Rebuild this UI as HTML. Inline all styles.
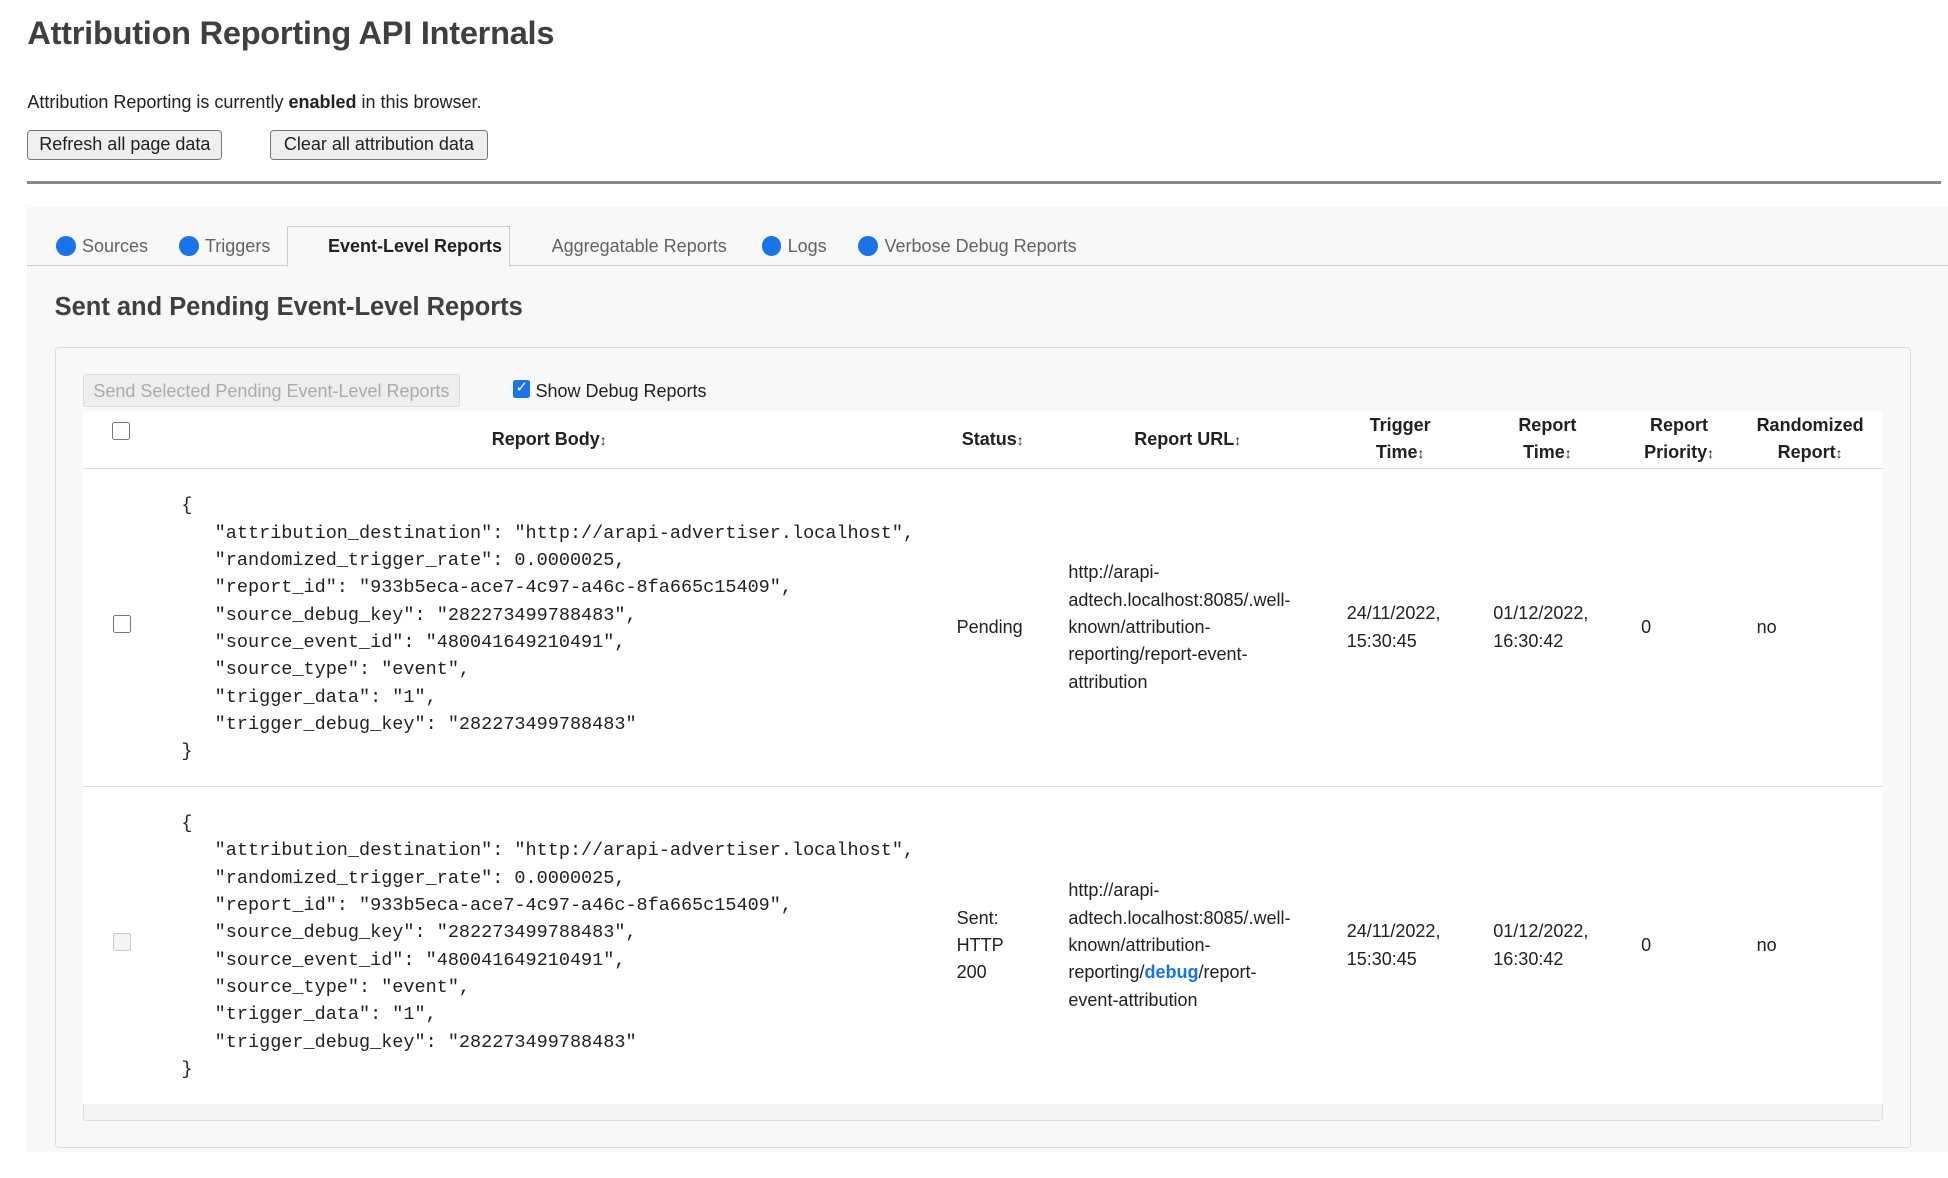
<!DOCTYPE html>
<html><head><meta charset="utf-8"><style>
html,body{margin:0;padding:0;background:#fff;width:1948px;height:1178px;overflow:hidden}
#w{zoom:1.24235;width:1568px;height:948px;position:relative;font-family:"Liberation Sans",Arial,sans-serif;color:#202124;font-size:14.5px}
.a{position:absolute}
h1{position:absolute;left:22px;top:12px;margin:0;font-size:26.2px;font-weight:bold;color:#3c4043;letter-spacing:-0.2px}
.btn{position:absolute;top:105px;border:1px solid #767676;border-radius:3px;background:#efefef;font-size:14.5px;line-height:22px;text-align:center;box-sizing:border-box;height:24px}
.dot{display:inline-block;width:16px;height:16px;border-radius:50%;background:#1a73e8;vertical-align:-3px;margin-right:5px}
.tab{position:absolute;top:190px;font-size:14.5px;color:#5f6368}
table{position:absolute;left:67px;top:331px;width:1449px;border-collapse:collapse;table-layout:fixed;background:#fff;font-size:14.5px}
th{height:46px;font-weight:bold;text-align:center;line-height:22px;padding:0 4px;border-bottom:1px solid #ddd}
td{vertical-align:middle;padding:0 16px;line-height:22px}
tr.r td{height:253px}
tr.r1 td{border-bottom:1px solid #e0e0e0}
pre{margin:0;font-family:"Liberation Mono",monospace;font-size:14.9px;line-height:22px;color:#202124}
.ar{font-size:11px}
</style></head><body><div id="w">
<h1>Attribution Reporting API Internals</h1>
<div class="a" style="left:22px;top:74px">Attribution Reporting is currently <b>enabled</b> in this browser.</div>
<div class="btn" style="left:22px;width:157px">Refresh all page data</div>
<div class="btn" style="left:217px;width:176px">Clear all attribution data</div>
<div class="a" style="left:22px;top:146px;width:1540px;height:2px;background:#888"></div>
<div class="a" style="left:22px;top:167px;width:1546px;height:760px;background:#f8f8f8"></div>
<div class="a" style="left:22px;top:213px;width:1546px;height:1px;background:#ccc"></div>
<div class="a" style="left:231px;top:182px;width:178px;height:32px;background:#f8f8f8;border:1px solid #ccc;border-bottom:none"></div>
<div class="tab" style="left:45px"><span class="dot"></span>Sources</div>
<div class="tab" style="left:144px"><span class="dot"></span>Triggers</div>
<div class="tab" style="left:264px;color:#202124;font-weight:bold">Event-Level Reports</div>
<div class="tab" style="left:444px">Aggregatable Reports</div>
<div class="tab" style="left:613px"><span class="dot"></span>Logs</div>
<div class="tab" style="left:691px"><span class="dot"></span>Verbose Debug Reports</div>
<div class="a" style="left:44px;top:236px;font-size:20.5px;font-weight:bold;color:#3c4043">Sent and Pending Event-Level Reports</div>
<div class="a" style="left:44px;top:279px;width:1494px;height:645px;border:1px solid #ddd;border-radius:3px;background:#f8f8f8;box-sizing:border-box"></div>
<div class="a" style="left:67px;top:301px;width:303px;height:27px;border:1px solid #ddd;border-radius:2px;background:#eee;color:#aaa;text-align:center;line-height:27px;box-sizing:border-box">Send Selected Pending Event-Level Reports</div>
<div class="a" style="left:413px;top:306px;width:14px;height:14px;background:#1a73e8;border-radius:2px;color:#fff;font-size:12px;line-height:14px;text-align:center">✓</div>
<div class="a" style="left:431px;top:307px">Show Debug Reports</div>
<div class="a" style="left:67px;top:331px;width:1449px;height:571px;border:1px solid #ddd;border-radius:3px;box-sizing:border-box;background:#f4f4f4"></div>
<table>
<colgroup><col style="width:63px"><col style="width:624px"><col style="width:90px"><col style="width:224px"><col style="width:118px"><col style="width:119px"><col style="width:93px"><col style="width:118px"></colgroup>
<tr><th><span style="display:inline-block;width:13px;height:13px;border:1px solid #767676;border-radius:2px;vertical-align:8px;margin-left:-2px"></span></th><th>Report Body<span class="ar">↕</span></th><th>Status<span class="ar">↕</span></th><th>Report URL<span class="ar">↕</span></th><th>Trigger<br>Time<span class="ar">↕</span></th><th>Report<br>Time<span class="ar">↕</span></th><th>Report<br>Priority<span class="ar">↕</span></th><th>Randomized<br>Report<span class="ar">↕</span></th></tr>
<tr class="r r1"><td style="padding:0 0 0 24px"><span style="display:inline-block;width:13px;height:13px;border:1px solid #767676;border-radius:2px"></span></td><td style="padding-top:2px"><pre>{
   "attribution_destination": "http://arapi-advertiser.localhost",
   "randomized_trigger_rate": 0.0000025,
   "report_id": "933b5eca-ace7-4c97-a46c-8fa665c15409",
   "source_debug_key": "282273499788483",
   "source_event_id": "480041649210491",
   "source_type": "event",
   "trigger_data": "1",
   "trigger_debug_key": "282273499788483"
}</pre></td><td>Pending</td><td style="padding-right:28px">http://arapi-adtech.localhost:8085/.well-known/attribution-reporting/report-event-attribution</td><td>24/11/2022, 15:30:45</td><td>01/12/2022, 16:30:42</td><td>0</td><td>no</td></tr>
<tr class="r"><td style="padding:0 0 0 24px"><span style="display:inline-block;width:13px;height:13px;border:1px solid #ccc;border-radius:2px;background:#f4f4f4"></span></td><td style="padding-top:2px"><pre>{
   "attribution_destination": "http://arapi-advertiser.localhost",
   "randomized_trigger_rate": 0.0000025,
   "report_id": "933b5eca-ace7-4c97-a46c-8fa665c15409",
   "source_debug_key": "282273499788483",
   "source_event_id": "480041649210491",
   "source_type": "event",
   "trigger_data": "1",
   "trigger_debug_key": "282273499788483"
}</pre></td><td>Sent: HTTP 200</td><td style="padding-right:28px">http://arapi-adtech.localhost:8085/.well-known/attribution-reporting/<b style="color:#1a73e8">debug</b>/report-event-attribution</td><td>24/11/2022, 15:30:45</td><td>01/12/2022, 16:30:42</td><td>0</td><td>no</td></tr>
</table>
</div></body></html>
